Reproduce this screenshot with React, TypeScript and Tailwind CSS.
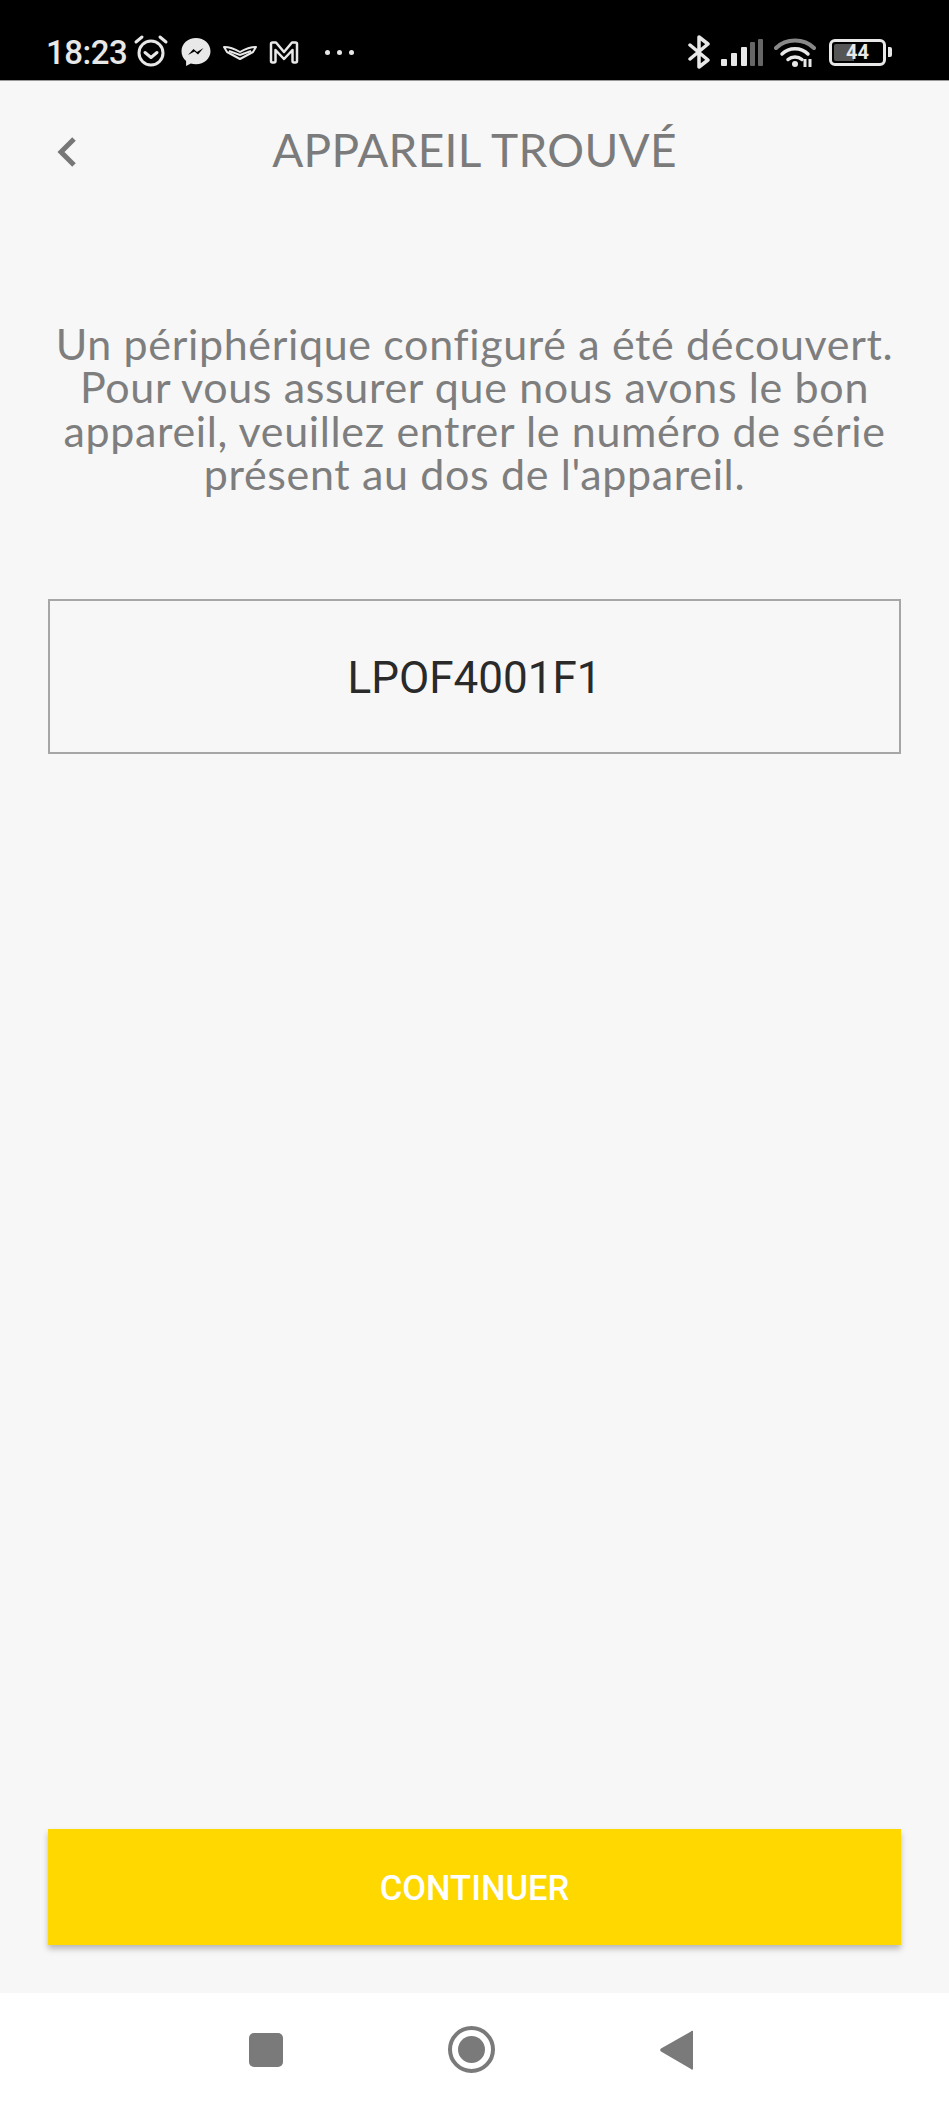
import React from 'react';

const StatusLeft = () => (
  <div className="flex items-center">
    <span className="text-[33px] font-medium leading-none text-[#e8e8e8] tracking-[-0.5px] font-['Roboto',sans-serif] w-[87px] -ml-[1px]">18:23</span>
    {/* alarm */}
    <svg width="36" height="34" viewBox="0 0 36 34" fill="none" stroke="#e8e8e8" className="mt-[-3px]">
      <circle cx="18" cy="19" r="12" strokeWidth="3" />
      <path d="M12 18.5l6 5 6-5" strokeWidth="3" strokeLinecap="round" strokeLinejoin="round" />
      <path d="M3 8l6-5M33 8l-6-5" strokeWidth="3" strokeLinecap="round" />
    </svg>
    {/* messenger */}
    <svg width="30" height="28" viewBox="0 0 30 28" className="ml-[12px]">
      <path d="M15 0C6.8 0 .5 5.9.5 13.3c0 3.9 1.7 7.3 4.6 9.6V28l4.7-2.6c1.6.5 3.4.8 5.2.8 8.200 0 14.500-5.800 14.500-13C29.500 5.900 23.200 0 15 0z" fill="#e8e8e8" />
      <path d="M7 17l5.500-6 3.500 3 6.500-4-5.500 6.500-3.500-3z" fill="#000" />
    </svg>
    {/* chevron logo */}
    <svg width="34" height="16" viewBox="0 0 34 16" fill="none" stroke="#e8e8e8" strokeWidth="2" className="ml-[12px]">
      <path d="M1 3c5 0 11 2 16 5 5-3 11-5 16-5l-3 5-13 7L4 8z" strokeLinejoin="round" />
      <path d="M6 7l11 4 11-4" />
    </svg>
    {/* M */}
    <svg width="30" height="23" viewBox="0 0 30 23" fill="none" stroke="#e8e8e8" strokeWidth="2.500" className="ml-[12px]">
      <path d="M2 3q0-1.500 1.500-1.500H7L15 11l8-9.500h3.500Q28 1.500 28 3v17q0 1.500-1.500 1.500H25q-1.500 0-1.500-1.500V9L15 18 6.500 9v11q0 1.500-1.500 1.500H3.500Q2 21.500 2 20z" strokeLinejoin="round" />
    </svg>
    <div className="flex gap-[7px] ml-[26px]">
      <div className="w-[5px] h-[5px] rounded-full bg-[#e8e8e8]"></div>
      <div className="w-[5px] h-[5px] rounded-full bg-[#e8e8e8]"></div>
      <div className="w-[5px] h-[5px] rounded-full bg-[#e8e8e8]"></div>
    </div>
  </div>
);

const StatusRight = () => (
  <div className="flex items-center">
    {/* bluetooth */}
    <svg width="22" height="34" viewBox="0 0 22 34" fill="none" stroke="#e8e8e8" strokeWidth="3.500" strokeLinejoin="round" strokeLinecap="round">
      <path d="M2 10l18 15-9 7V2l9 7L2 24" />
    </svg>
    {/* signal */}
    <svg width="42" height="27" viewBox="0 0 42 27" className="ml-[11px]">
      <rect x="0" y="20" width="6" height="7" rx="1" fill="#e8e8e8" />
      <rect x="10" y="14" width="6" height="13" rx="1" fill="#e8e8e8" />
      <rect x="20" y="8" width="6" height="19" rx="1" fill="#e8e8e8" />
      <rect x="29" y="3" width="5" height="24" rx="1" fill="#666" />
      <rect x="37" y="0" width="5" height="27" rx="1" fill="#666" />
    </svg>
    {/* wifi */}
    <svg width="42" height="31" viewBox="0 0 42 31" fill="none" className="ml-[11px]">
      <path d="M2 11C12 1 30 1 40 11" stroke="#888" strokeWidth="4" strokeLinecap="round" />
      <path d="M8 17c7-7 19-7 26 0" stroke="#e8e8e8" strokeWidth="3.500" strokeLinecap="round" />
      <path d="M14 22.500c4-3.500 10-3.500 14 0" stroke="#e8e8e8" strokeWidth="3.500" strokeLinecap="round" />
      <circle cx="21" cy="27" r="3" fill="#e8e8e8" />
      <path d="M31 22v8M36 30v-8" stroke="#e8e8e8" strokeWidth="3" />
    </svg>
    {/* battery */}
    <div className="flex items-center ml-[13px]">
      <div className="relative w-[57px] h-[27px] rounded-[6px] border-[3px] border-[#e8e8e8] p-[2px]">
        <div className="w-[20px] h-full rounded-l-[2px] bg-[#555]"></div>
        <span className="absolute inset-0 flex items-center justify-center text-[20px] font-bold leading-none text-[#e8e8e8] font-['Roboto',sans-serif]">44</span>
      </div>
      <div className="w-[4px] h-[10px] ml-[2px] rounded-r-[2px] bg-[#e8e8e8]"></div>
    </div>
  </div>
);

export default function App() {
  return (
    <div className="w-[949px] h-[2108px] flex flex-col bg-[#f7f7f7] font-['Lato',sans-serif] overflow-hidden">
      {/* Status bar */}
      <div className="h-[81px] shrink-0 bg-black border-b border-[#999] flex items-center justify-between pl-[47px] pr-[57px] pt-[27px] pb-[3px]">
        <StatusLeft />
        <StatusRight />
      </div>

      {/* Header */}
      <div className="grid grid-cols-[1fr_auto_1fr] items-center pt-[43px] px-[57px]">
        <svg width="20" height="32" viewBox="0 0 20 32" fill="none" stroke="#777" strokeWidth="5" className="mt-[3px]">
          <path d="M17 3L4 16l13 13" />
        </svg>
        <h1 className="text-[46px] leading-[52px] font-normal tracking-[0.3px] text-[#7b7b7b] whitespace-nowrap">APPAREIL TROUVÉ</h1>
        <div></div>
      </div>

      {/* Description */}
      <p className="mt-[146px] text-center text-[43px] tracking-[0.65px] leading-[43.400px] font-normal text-[#7e7e7e]">
        Un périphérique configuré a été découvert.
        <br />
        Pour vous assurer que nous avons le bon
        <br />
        appareil, veuillez entrer le numéro de série
        <br />
        présent au dos de l'appareil.
      </p>

      {/* Serial number */}
      <div className="mx-[48px] mt-[103px] h-[155px] pt-[3px] border-[2px] border-[#a6a6a6] flex items-center justify-center text-[44px] text-[#2a2a2a] font-['Roboto',sans-serif]">
        LPOF4001F1
      </div>

      {/* Button */}
      <div className="mt-auto px-[48px] pb-[48px]">
        <button className="w-full h-[116px] pt-[3px] bg-[#ffd800] text-white text-[34.500px] font-medium font-['Roboto',sans-serif] shadow-[0_4px_6px_rgba(0,0,0,0.25)]">
          CONTINUER
        </button>
      </div>

      {/* Nav bar */}
      <div className="h-[115px] shrink-0 bg-white flex items-center pl-[249px] pb-[2px]">
        <div className="w-[34px] h-[34px] rounded-[5px] bg-[#7a7a7a]"></div>
        <div className="ml-[165px] w-[47px] h-[47px] rounded-full border-[4px] border-[#7a7a7a] flex items-center justify-center">
          <div className="w-[27px] h-[27px] rounded-full bg-[#7a7a7a]"></div>
        </div>
        <svg width="33" height="40" viewBox="0 0 33 40" className="ml-[165px]">
          <path d="M31 1.500a1 1 0 0 1 2 0.500v36a1 1 0 0 1-2 1L1 21.500a2 2 0 0 1 0-3z" fill="#7a7a7a" />
        </svg>
      </div>
    </div>
  );
}
